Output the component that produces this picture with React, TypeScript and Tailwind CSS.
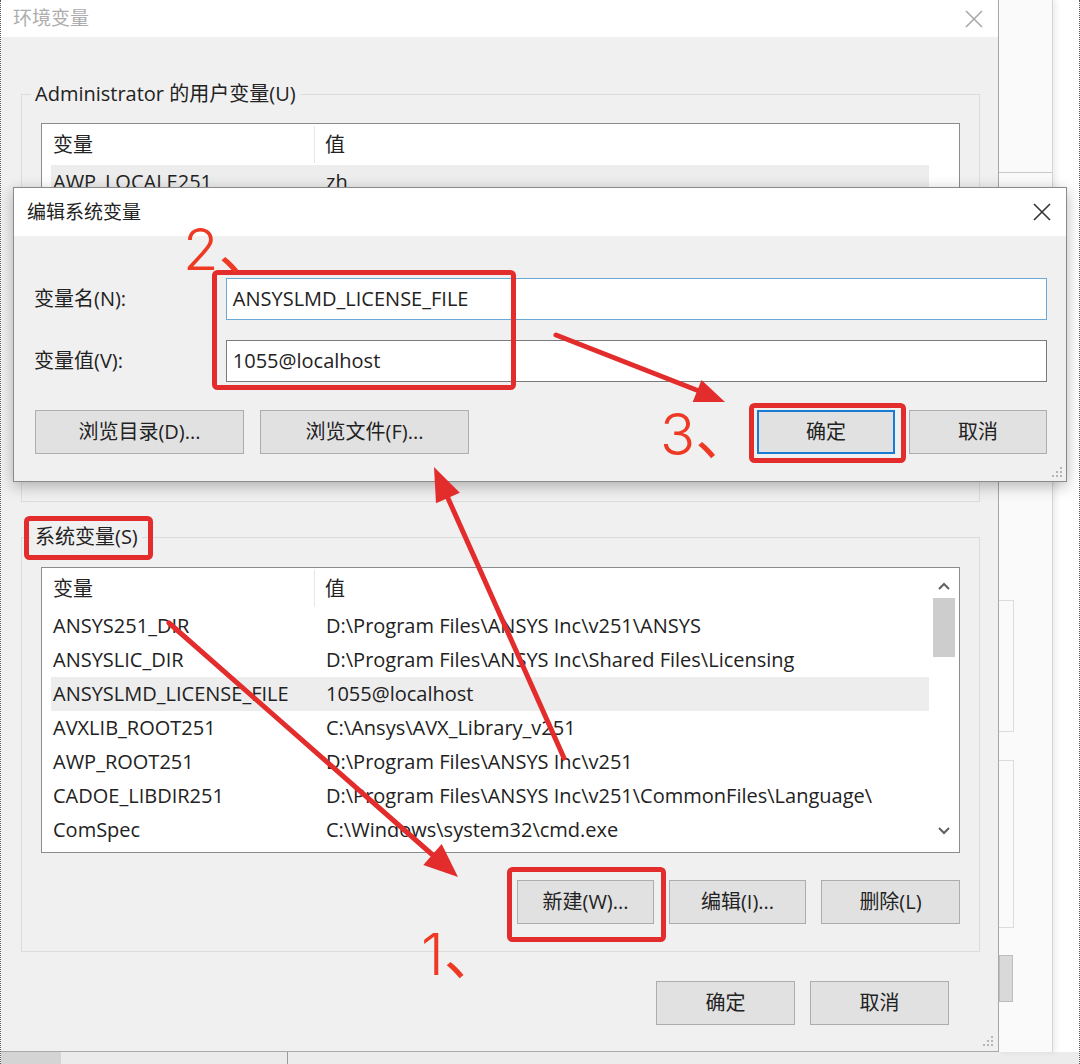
import clsx from "clsx";

type Row = [string, string];

const sysRows: Row[] = [
  ["ANSYS251_DIR", "D:\\Program Files\\ANSYS Inc\\v251\\ANSYS"],
  ["ANSYSLIC_DIR", "D:\\Program Files\\ANSYS Inc\\Shared Files\\Licensing"],
  ["ANSYSLMD_LICENSE_FILE", "1055@localhost"],
  ["AVXLIB_ROOT251", "C:\\Ansys\\AVX_Library_v251"],
  ["AWP_ROOT251", "D:\\Program Files\\ANSYS Inc\\v251"],
  ["CADOE_LIBDIR251", "D:\\Program Files\\ANSYS Inc\\v251\\CommonFiles\\Language\\"],
  ["ComSpec", "C:\\Windows\\system32\\cmd.exe"],
];

const userRows: Row[] = [["AWP_LOCALE251", "zh"]];

const XIcon = ({ className }: { className?: string }) => (
  <svg width="18" height="18" viewBox="0 0 18 18" className={className}>
    <path d="M1 1L17 17M17 1L1 17" stroke="currentColor" strokeWidth="1.6" />
  </svg>
);

const Grip = () => (
  <svg width="12" height="12" viewBox="0 0 12 12" className="text-[#b5b5b5]">
    <g fill="currentColor">
      <rect x="9" y="1" width="2" height="2" />
      <rect x="5" y="5" width="2" height="2" />
      <rect x="9" y="5" width="2" height="2" />
      <rect x="1" y="9" width="2" height="2" />
      <rect x="5" y="9" width="2" height="2" />
      <rect x="9" y="9" width="2" height="2" />
    </g>
  </svg>
);

const Chevron = ({ up }: { up?: boolean }) => (
  <svg width="14" height="9" viewBox="0 0 14 9" className="text-[#606060]">
    <path d={up ? "M2 7L7 2L12 7" : "M2 2L7 7L12 2"} fill="none" stroke="currentColor" strokeWidth="2" />
  </svg>
);

const Btn = ({
  children,
  className,
  primary,
}: {
  children: React.ReactNode;
  className?: string;
  primary?: boolean;
}) => (
  <div
    className={clsx(
      "flex h-[44px] shrink-0 items-center justify-center bg-[#e1e1e1] text-[20px] text-[#222]",
      primary ? "border-2 border-[#1a7ad4]" : "border border-[#adadad]",
      className
    )}
  >
    {children}
  </div>
);

const VarList = ({
  rows,
  selected,
  scroll,
  className,
}: {
  rows: Row[];
  selected: number;
  scroll?: boolean;
  className?: string;
}) => (
  <div className={clsx("flex w-[919px] overflow-hidden border border-[#8c8c8c] bg-white", className)}>
    <div className="min-w-0 flex-1">
      <div className="flex h-[41px] items-center">
        <div className="flex h-[37px] w-[273px] items-center border-r border-[#e6e6e6] pl-[11px]">变量</div>
        <div className="pl-[10px]">值</div>
      </div>
      {rows.map(([name, value], i) => (
        <div
          key={name}
          className={clsx("ml-[9px] flex h-[34px] items-center whitespace-nowrap", i === selected && "bg-[#ededed]")}
        >
          <div className="w-[264px] pl-[2px]">{name}</div>
          <div className="pl-[11px]">{value}</div>
        </div>
      ))}
    </div>
    <div className="flex w-[30px] flex-col items-center">
      {scroll && (
        <>
          <div className="flex h-[30px] items-center pt-[6px]">
            <Chevron up />
          </div>
          <div className="h-[59px] w-[22px] bg-[#cdcdcd]" />
          <div className="flex-1" />
          <div className="flex h-[32px] items-start pt-[6px]">
            <Chevron />
          </div>
        </>
      )}
    </div>
  </div>
);

const MainWindow = () => (
  <div className="flex h-[1052px] w-[998px] shrink-0 flex-col border-b border-r border-[#a9a9a9] bg-[#f0f0f0] shadow-[2px_0_6px_rgba(0,0,0,0.15)]">
    <div className="flex h-[37px] items-center justify-between bg-white pl-[12px] pr-[15px]">
      <span className="text-[19px] text-[#adadad]">环境变量</span>
      <XIcon className="text-[#a8a8a8]" />
    </div>
    <div className="flex flex-1 flex-col pl-[20px]">
      <fieldset className="mt-[45px] w-[956px] border border-[#dcdcdc] px-[19px] pb-[30px]">
        <legend className="-ml-[10px] px-[4px] text-[20px] leading-[24px]">Administrator 的用户变量(U)</legend>
        <VarList rows={userRows} selected={0} className="mt-[17px] h-[280px]" />
        <div className="mt-[24px] flex justify-end gap-[15px]">
          <Btn className="w-[137px]">新建(N)...</Btn>
          <Btn className="w-[137px]">编辑(E)...</Btn>
          <Btn className="w-[137px]">删除(D)</Btn>
        </div>
      </fieldset>
      <fieldset className="mt-[23px] w-[956px] border border-[#dcdcdc] px-[19px] pb-[27px]">
        <legend className="-ml-[10px] px-[4px] text-[20px] leading-[24px]">系统变量(S)</legend>
        <VarList rows={sysRows} selected={2} scroll className="mt-[18px] h-[286px]" />
        <div className="mt-[27px] flex justify-end gap-[15px]">
          <Btn className="w-[137px]">新建(W)...</Btn>
          <Btn className="w-[137px]">编辑(I)...</Btn>
          <Btn className="w-[139px]">删除(L)</Btn>
        </div>
      </fieldset>
      <div className="mt-[29px] flex w-[956px] justify-end gap-[15px] pr-[28px]">
        <Btn className="w-[139px]">确定</Btn>
        <Btn className="w-[139px]">取消</Btn>
      </div>
      <div className="mt-auto flex justify-end pb-[4px] pr-[4px]">
        <Grip />
      </div>
    </div>
  </div>
);

const BehindWindow = () => (
  <div className="relative flex-1 bg-white">
    <div className="flex h-full w-[54px] flex-col border-r border-[#d4d4d4] bg-[#fafafa] shadow-[3px_0_6px_rgba(0,0,0,0.08)]">
      <div className="mt-[172px] h-[16px] border-t border-[#c8c8c8]" />
      <div className="mt-[412px] h-[132px] w-[15px] border-y border-r border-[#dcdcdc]" />
      <div className="mt-[28px] h-[168px] w-[15px] border-y border-r border-[#dcdcdc]" />
      <div className="mt-[27px] h-[47px] w-[14px] border border-[#bdbdbd] bg-[#d9d9d9]" />
    </div>
  </div>
);

const EditDialog = () => (
  <div className="absolute left-[12px] top-[187px] flex h-[295px] w-[1054px] flex-col border border-[#8a8a8a] bg-[#f0f0f0] shadow-[0_4px_14px_rgba(0,0,0,0.28)]">
    <div className="flex h-[48px] items-center justify-between bg-white pl-[13px] pr-[15px]">
      <span className="text-[19px] text-[#222]">编辑系统变量</span>
      <XIcon className="text-[#333]" />
    </div>
    <div className="flex flex-1 flex-col pl-[20px] pr-[19px]">
      <div className="mt-[42px] flex items-center">
        <div className="w-[192px]">变量名(N):</div>
        <div className="flex h-[42px] w-[822px] items-center border border-[#6aa8d8] bg-white pl-[6px]">
          ANSYSLMD_LICENSE_FILE
        </div>
      </div>
      <div className="mt-[20px] flex items-center">
        <div className="w-[192px]">变量值(V):</div>
        <div className="flex h-[42px] w-[822px] items-center border border-[#7a7a7a] bg-white pl-[6px]">
          1055@localhost
        </div>
      </div>
      <div className="mt-[28px] flex items-center pl-[1px]">
        <Btn className="w-[209px]">浏览目录(D)...</Btn>
        <Btn className="ml-[16px] w-[209px]">浏览文件(F)...</Btn>
        <Btn primary className="ml-auto w-[138px]">
          确定
        </Btn>
        <Btn className="ml-[14px] w-[138px]">取消</Btn>
      </div>
    </div>
    <div className="absolute bottom-[3px] right-[3px]">
      <Grip />
    </div>
  </div>
);

const Step = ({ n, className }: { n: string; className: string }) => (
  <div className={clsx("absolute flex items-baseline text-[58px] leading-none text-[#ee3a24]", className)}>
    <span className="font-light">{n}</span>
    <span className="tracking-[-34px]">、</span>
  </div>
);

const Annotations = () => (
  <>
    <svg className="pointer-events-none absolute inset-0" width="1080" height="1064">
      <g fill="none" stroke="#e32c2c" strokeWidth="5">
        <rect x="213.5" y="272.5" width="299" height="115" rx="3" />
        <rect x="750.5" y="405.5" width="152" height="55" rx="3" />
        <rect x="25.5" y="518.5" width="124" height="39" rx="3" />
        <rect x="508.5" y="869.5" width="154" height="70" rx="3" />
      </g>
      <g stroke="#e32c2c" strokeWidth="5" strokeLinecap="round">
        <line x1="555" y1="335" x2="698" y2="391" />
        <line x1="168" y1="623" x2="434" y2="857" />
        <line x1="563" y1="758" x2="446" y2="496" />
      </g>
      <g fill="#e32c2c">
        <polygon points="724,402 691.7,402.1 700.5,379.9" />
        <polygon points="457,877 422.3,865.1 440.7,844.1" />
        <polygon points="433,467 458.8,492.7 435,503.3" />
      </g>
    </svg>
    <Step n="2" className="left-[182px] top-[220px]" />
    <Step n="3" className="left-[659px] top-[405px]" />
    <Step n="1" className="left-[420px] top-[925px]" />
  </>
);

export default function App() {
  return (
    <div className="relative h-[1064px] w-[1080px] overflow-hidden border-x border-dotted border-[#555] bg-white font-['Open_Sans','Noto_Sans_CJK_SC',sans-serif] text-[20px] text-[#222]">
      <div className="flex h-[1052px]">
        <MainWindow />
        <BehindWindow />
      </div>
      <div className="flex h-[12px]">
        <div className="w-[60px] bg-[#d4d4d4]" />
        <div className="w-[227px] border-r border-[#9a9a9a] bg-[#ebebeb]" />
        <div className="flex-1 bg-[#ececec]" />
      </div>
      <EditDialog />
      <div className="font-['Inter','Noto_Sans_CJK_SC',sans-serif]">
        <Annotations />
      </div>
    </div>
  );
}
